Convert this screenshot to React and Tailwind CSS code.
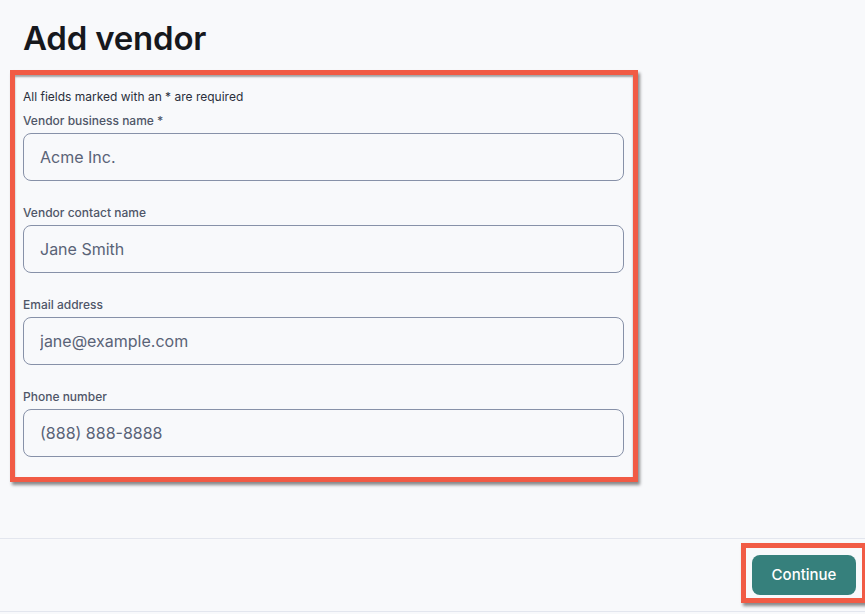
import { useState } from "react";

const fields = [
    { label: "Vendor business name *", placeholder: "Acme Inc." },
    { label: "Vendor contact name", placeholder: "Jane Smith" },
    { label: "Email address", placeholder: "jane@example.com" },
    { label: "Phone number", placeholder: "(888) 888-8888" },
];

export default function App(){

    const [values, setValues] = useState({});

    return(
        <div className="h-[614px] flex flex-col bg-[#f8f9fb] text-[#1f2433]" style={{ fontFamily: "Inter, 'Noto Sans', sans-serif" }}>

            <div className="flex-1 px-[10px]">
                <h1 className="pt-[18px] pl-[13px] text-[33px] leading-[40px] font-semibold tracking-[-0.2px] text-[#16181d]">Add vendor</h1>

                <div className="mt-[12px] w-[628px] border-[5px] border-[#f15b45] shadow-[2px_3px_3px_rgba(0,0,0,0.45),inset_0_2px_2px_rgba(0,0,0,0.35)] pl-[8px] pr-[9px] pt-[14px] pb-[20px]">
                    <p className="text-[12px] leading-[16px] text-[#2a2f3c]">All fields marked with an * are required</p>

                    <div className="flex flex-col gap-[24px] mt-[8px]">
                        {fields.map((f, i) => (
                            <div key={i} className="flex flex-col">
                                <label className="text-[12px] leading-[16px] font-medium text-[#4f5668]">{f.label}</label>
                                <input
                                    className="mt-[4px] h-[48px] w-full rounded-[8px] border border-[#8791a8] bg-[#f8f9fb] px-[16px] text-[16px] text-[#5a6377] placeholder:text-[#5a6377] outline-none"
                                    placeholder={f.placeholder}
                                    value={values[i] || ''}
                                    onChange={ev => setValues({ ...values, [i]: ev.target.value })}
                                />
                            </div>
                        ))}
                    </div>
                </div>
            </div>

            <div className="h-[74px] border-t border-b border-[#e3e6ee] flex items-start justify-end pt-[4px] mr-[-2px] mb-[2px]">
                <div className="border-[5px] border-[#f15b45] shadow-[2px_3px_3px_rgba(0,0,0,0.45)] pl-[6px] pr-[6px] pt-[7px] pb-[3px]">
                    <button className="h-[40px] w-[104px] rounded-[8px] bg-[#36807c] text-white text-[15px] font-medium">Continue</button>
                </div>
            </div>
        </div>
    )
}
